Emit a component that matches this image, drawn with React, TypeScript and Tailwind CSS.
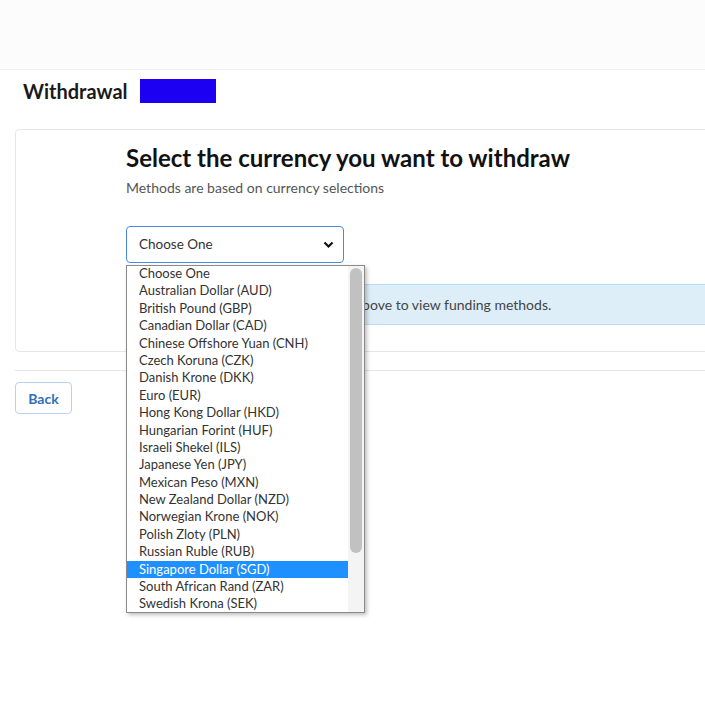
import React from "react";

const items = [
  "Choose One",
  "Australian Dollar (AUD)",
  "British Pound (GBP)",
  "Canadian Dollar (CAD)",
  "Chinese Offshore Yuan (CNH)",
  "Czech Koruna (CZK)",
  "Danish Krone (DKK)",
  "Euro (EUR)",
  "Hong Kong Dollar (HKD)",
  "Hungarian Forint (HUF)",
  "Israeli Shekel (ILS)",
  "Japanese Yen (JPY)",
  "Mexican Peso (MXN)",
  "New Zealand Dollar (NZD)",
  "Norwegian Krone (NOK)",
  "Polish Zloty (PLN)",
  "Russian Ruble (RUB)",
  "Singapore Dollar (SGD)",
  "South African Rand (ZAR)",
  "Swedish Krona (SEK)",
];

export default function App() {
  return (
    <div
      className="relative w-[705px] h-[705px] overflow-hidden bg-white text-[#222]"
      style={{ fontFamily: "Lato, 'Liberation Sans', sans-serif" }}
    >
      <div className="h-[70px] bg-[#fcfcfc] border-b border-[#f1f1f1]" />
      <div className="flex items-center h-[24px] mt-[9px] pl-[23px]">
        <h1 className="text-[20px] font-bold text-[#1a1a1a] leading-none">Withdrawal</h1>
        <div className="ml-[12px] w-[76px] h-[24px] bg-[#1b00f2]" />
      </div>

      <div className="ml-[15px] mt-[26px] w-[720px] h-[223px] border border-[#e6e6e6] rounded-[4px] pl-[110px] pt-[13px]">
        <h2 className="text-[24px] leading-[30px] font-bold text-[#111]">
          Select the currency you want to withdraw
        </h2>
        <p className="mt-[6px] text-[14px] leading-[17px] text-[#555]">
          Methods are based on currency selections
        </p>
        <div className="mt-[30px] w-[218px] h-[37px] border border-[#4a8ae0] rounded-[4px] flex items-center justify-between pl-[12px] pr-[9px] text-[13.5px] text-[#333]">
          <span>Choose One</span>
          <svg width="11" height="8" viewBox="0 0 11 8">
            <path d="M1.5 1.5 L5.5 5.5 L9.5 1.5" fill="none" stroke="#111" strokeWidth="2.2" />
          </svg>
        </div>
        <div className="mt-[21px] h-[41px] bg-[#ddeef9] border border-[#bcdcf4] flex items-center pl-[42px] text-[14px] text-[#444] whitespace-nowrap">
          Select a currency from the list above to view funding methods.
        </div>
      </div>

      <div className="ml-[15px] mt-[18px] h-px bg-[#e6e6e6]" />

      <button className="ml-[15px] mt-[11px] w-[57px] h-[32px] border border-[#b9d0ee] rounded-[4px] text-[14px] font-bold text-[#2f6fba] bg-white">
        Back
      </button>

      <div className="absolute left-[126px] top-[265px] w-[239px] h-[348px] border border-[#8a8a8a] bg-white shadow-[2px_2px_4px_rgba(0,0,0,0.25)] overflow-hidden flex">
        <div className="flex-1 -mt-[1px]">
          {items.map((it) => (
            <div
              key={it}
              className={
                "h-[17.4px] leading-[17.4px] pl-[12px] text-[13px] whitespace-nowrap " +
                (it === "Singapore Dollar (SGD)" ? "bg-[#1e90ff] text-white" : "text-[#333]")
              }
            >
              {it}
            </div>
          ))}
        </div>
        <div className="w-[16px] bg-[#f4f4f4] pt-[2px] flex justify-center">
          <div className="w-[12px] h-[285px] rounded-[6px] bg-[#c1c1c1]" />
        </div>
      </div>
    </div>
  );
}
